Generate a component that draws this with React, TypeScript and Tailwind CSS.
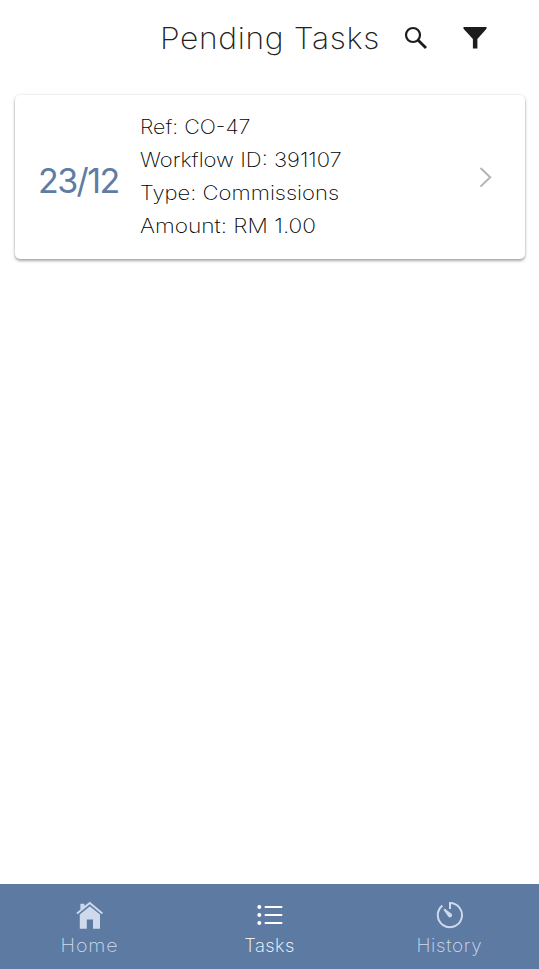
import type { ReactNode } from "react";

interface Line {
  text: string;
  className: string;
}

interface Task {
  date: string;
  lines: Line[];
}

interface Tab {
  label: string;
  icon: ReactNode;
  active?: boolean;
  labelClass: string;
}

const TASKS: Task[] = [
  {
    date: "23/12",
    lines: [
      { text: "Ref: CO-47", className: "scale-x-[1.07]" },
      { text: "Workflow ID: 391107", className: "scale-x-[1.103]" },
      { text: "Type: Commissions", className: "scale-x-[1.103]" },
      { text: "Amount: RM 1.00", className: "scale-x-[1.135]" },
    ],
  },
];

function SearchIcon() {
  return (
    <svg width="24" height="24" viewBox="0 0 24 24" fill="none" stroke="#1c1c1c">
      <circle cx="9" cy="9" r="7" strokeWidth="2.2" />
      <path d="M14.2 14.2 22 22" strokeWidth="2.8" />
    </svg>
  );
}

function FunnelIcon() {
  return (
    <svg width="24" height="24" viewBox="0 0 24 24" fill="#1c1c1c">
      <path d="M0.5 1h23v1.8L14.4 13v9.6H9.9V13L0.5 2.8z" />
    </svg>
  );
}

function ChevronIcon() {
  return (
    <svg width="14" height="22" viewBox="0 0 14 22" fill="none" stroke="#b4b4b4" strokeWidth="2">
      <path d="M1.5 2 11.2 11.3 1.5 20.6" />
    </svg>
  );
}

function HomeIcon() {
  return (
    <svg width="28" height="28" viewBox="0 0 28 28" fill="currentColor">
      <path d="M13.8 0.7 8.4 5V2.8H4.4V8.4L0.4 11.8l1.2 1.4L13.8 3.2l12 10 1.2-1.4z" />
      <path d="M13.8 5.2 3.8 13.4v14.4h7V18.4h6.2v9.4h7V13.4z" />
    </svg>
  );
}

function ListIcon() {
  return (
    <svg width="28" height="28" viewBox="0 0 28 28" fill="currentColor">
      {[6, 14, 22].map((y) => (
        <g key={y}>
          <circle cx="3.3" cy={y} r="2" />
          <rect x="8.5" y={y - 1} width="18" height="2" rx="1" />
        </g>
      ))}
    </svg>
  );
}

function TimerIcon() {
  return (
    <svg width="28" height="28" viewBox="0 0 28 28" fill="none" stroke="currentColor" strokeWidth="2">
      <path d="M6.4 4.6A12.1 12.1 0 1 0 14 2v6" />
      <path d="M7.4 8.8 12.4 15.8a2.1 2.1 0 0 0 3.1-3.1L8.6 7.5z" fill="currentColor" stroke="none" />
    </svg>
  );
}

const TABS: Tab[] = [
  { label: "Home", icon: <HomeIcon />, labelClass: "tracking-[0.8px] scale-x-[1.09]" },
  { label: "Tasks", icon: <ListIcon />, active: true, labelClass: "tracking-[0.4px] scale-x-[1.03]" },
  { label: "History", icon: <TimerIcon />, labelClass: "tracking-[0.7px] scale-x-[1.05]" },
];

function TaskCard({ task }: { task: Task }) {
  return (
    <article className="mr-[14px] ml-[15px] flex h-[164px] items-center rounded-[5px] bg-white shadow-[0_2px_3px_rgba(0,0,0,0.32),0_0_3px_rgba(0,0,0,0.12)]">
      <div className="w-[125px] pt-2 pl-[23px] text-[34px] leading-10 font-[375] text-[#5f7ca5]">
        <span className="tracking-[-1.6px]">{task.date}</span>
      </div>
      <ul className="flex-1 text-[20px] leading-[33px] font-extralight whitespace-nowrap text-black">
        {task.lines.map((l) => (
          <li key={l.text}>
            <span className={`inline-block origin-left ${l.className}`}>{l.text}</span>
          </li>
        ))}
      </ul>
      <button className="mr-8" aria-label="Open task">
        <ChevronIcon />
      </button>
    </article>
  );
}

export default function App() {
  return (
    <div className="flex h-screen flex-col overflow-hidden bg-white font-['Inter',sans-serif]">
      <header className="flex h-[95px] items-start pt-[18px] pl-[160px]">
        <h1 className="w-[244px] text-[30px] leading-10 font-extralight whitespace-nowrap text-[#222]">
          <span className="inline-block origin-left scale-x-[1.06] tracking-[0.6px]">Pending Tasks</span>
        </h1>
        <button className="mt-2" aria-label="Search">
          <SearchIcon />
        </button>
        <button className="mt-2 ml-[35px]" aria-label="Filter">
          <FunnelIcon />
        </button>
      </header>

      <main className="flex-1">
        {TASKS.map((t) => (
          <TaskCard key={t.date} task={t} />
        ))}
      </main>

      <nav className="grid h-[85px] grid-cols-[179px_181px_179px] bg-[#5d7aa3]">
        {TABS.map((t) => (
          <button
            key={t.label}
            className={`flex flex-col items-center pt-[17px] ${t.active ? "text-white" : "text-[#cedaeb]"}`}
          >
            {t.icon}
            <span className={`mt-[5px] text-[18px] leading-6 font-extralight ${t.labelClass}`}>{t.label}</span>
          </button>
        ))}
      </nav>
    </div>
  );
}
